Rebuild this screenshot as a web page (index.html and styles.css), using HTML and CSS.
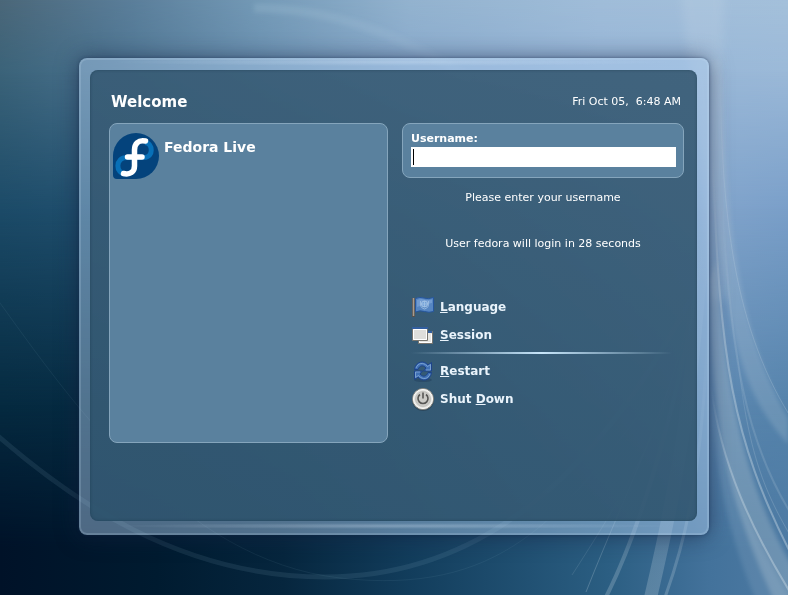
FILE: index.html
```html
<!DOCTYPE html>
<html lang="en">
<head>
<meta charset="utf-8">
<title>Welcome</title>
<link rel="stylesheet" href="styles.css">
</head>
<body>
<div class="backdrop" aria-hidden="true">
  <div class="tint tint-top"></div>
  <div class="tint tint-upper"></div>
  <div class="tint tint-mid"></div>
  <div class="tint tint-low"></div>
  <div class="tint tint-base"></div>
  <svg class="streaks" viewBox="0 0 788 595" preserveAspectRatio="none">
    <defs>
      <filter id="soft" x="-20%" y="-20%" width="140%" height="140%"><feGaussianBlur stdDeviation="2"/></filter>
      <filter id="softer" x="-50%" y="-20%" width="200%" height="140%"><feGaussianBlur stdDeviation="5"/></filter>
      <linearGradient id="fade" x1="0" y1="0" x2="0" y2="1">
        <stop offset="0" stop-color="#d5e2ea" stop-opacity="0"/>
        <stop offset="1" stop-color="#d5e2ea" stop-opacity=".24"/>
      </linearGradient>
      <linearGradient id="glow" x1="0" y1="0" x2="0" y2="1">
        <stop offset="0" stop-color="#d5e2ea" stop-opacity="0"/>
        <stop offset=".4" stop-color="#d5e2ea" stop-opacity=".35"/>
        <stop offset="1" stop-color="#d5e2ea" stop-opacity=".4"/>
      </linearGradient>
      <linearGradient id="arc" gradientUnits="userSpaceOnUse" x1="250" y1="0" x2="480" y2="0">
        <stop offset="0" stop-color="#cfe6f0" stop-opacity=".14"/>
        <stop offset="1" stop-color="#cfe6f0" stop-opacity="0.04"/>
      </linearGradient>
    </defs>
    <path d="M254 8C330 8 400 34 470 78" fill="none" stroke="url(#arc)" stroke-width="9" filter="url(#soft)"/>
    <g fill="none" stroke="#a5d2de">
      <path d="M-10 429C70 500 180 577 325 577S590 490 690 300" stroke-width="5" opacity=".1"/>
      <path d="M-5 296C70 400 180 560 340 578S560 520 650 400" stroke-width="1" opacity=".07"/>
    </g>
    <path d="M678 -40C686 60 700 120 712 300H726C722 200 720 80 726 -40Z" fill="#dbe6ee" opacity=".15" filter="url(#softer)"/>
    <path d="M712 60H720C728 230 738 330 788 418V444C748 400 728 350 712 180Z" fill="#c4d4df" opacity=".2" filter="url(#soft)"/>
    <path d="M710 280C712 400 718 480 774 600H800V580C752 500 728 420 716 260Z" fill="#c4d3da" opacity=".28" filter="url(#soft)"/>
    <path d="M712 400C714 470 730 540 756 600H790C750 530 730 480 712 400Z" fill="#b8cde0" opacity=".14" filter="url(#soft)"/>
    <g fill="none" stroke="url(#glow)">
      <path d="M720 60C721 200 730 320 790 416" opacity=".5"/>
      <path d="M713 160C719 360 733 440 790 552" stroke-width="2"/>
      <path d="M722 200C731 360 746 440 790 512" stroke-width="2" opacity=".4"/>
      <path d="M736 340C746 450 764 490 790 535" opacity=".5"/>
      <path d="M711 385C720 465 755 535 790 592" stroke-width="2"/>
    </g>
    <g fill="none" stroke="url(#fade)">
      <path d="M704 220C698 370 640 470 572 575" opacity=".5"/>
      <path d="M700 260C684 380 630 480 586 592" stroke-width="1"/>
      <path d="M702 250C684 390 640 530 606 597" stroke-width="4"/>
      <path d="M706 210C692 370 690 430 650 600" stroke-width="13"/>
      <path d="M708 330C702 460 690 530 664 600" stroke-width="3"/>
    </g>
  </svg>
</div>

<main class="screen">
  <div class="frame">
    <div class="greeter">
      <header class="greeter-head">
        <h1>Welcome</h1>
        <time class="clock">Fri Oct 05,  6:48 AM</time>
      </header>
      <div class="columns">
        <section class="users" aria-label="Users">
          <button class="user" type="button">
            <svg class="avatar" viewBox="0 0 46 46" aria-hidden="true">
              <path d="M23 0A23 23 0 1 1 23 46H4Q0 46 0 42V23A23 23 0 0 1 23 0Z" fill="#04437c"/>
              <path d="M32 9.500C40 10 41 24.500 31 24.500H14C2 24.500 2 41 13 41" fill="none" stroke="#0870b7" stroke-width="5"/>
              <path d="M32.500 8C25 6.500 21.500 11 21.500 17V33C21.500 39 17 42 10.500 40.500M14.500 24H29" fill="none" stroke="#fff" stroke-width="5.500" stroke-linecap="round"/>
            </svg>
            <span>Fedora Live</span>
          </button>
        </section>
        <section class="login">
          <form class="entry">
            <label for="username">Username:</label>
            <div class="field"><input id="username" type="text" autocomplete="off"><span class="caret"></span></div>
          </form>
          <p class="prompt">Please enter your username</p>
          <p class="timer">User fedora will login in 28 seconds</p>
          <nav class="menu">
            <button type="button">
              <svg viewBox="0 0 24 24" aria-hidden="true">
                <path d="M2.500 3V22" stroke="#56504c" stroke-width="3"/><path d="M2.500 3V21" stroke="#a59c91" stroke-width="1.500"/>
                <path d="M4.500 3.500Q9 1.500 13 3T22.500 2.500V16.500Q18 18 13.500 16.500T4.500 17Z" fill="#5686c2" stroke="#26569c"/>
                <path d="M6 5Q10 3.500 13 4.500T21 4.500V8Q14 9 6 12Z" fill="#8bb0df" opacity=".5"/>
                <circle cx="13.500" cy="9" r="3" fill="#72a1d8" stroke="#a5c4e6"/><path d="M9.500 6Q8.500 13 13.500 14Q18.500 13 17.500 6M11 9H16M13.500 6V12" fill="none" stroke="#a5c4e6" stroke-width=".8"/>
              </svg>
              <span><u>L</u>anguage</span>
            </button>
            <button type="button">
              <svg viewBox="0 0 24 24" aria-hidden="true">
                <path d="M7.500 8.500H21.500V20.500H7.500Z" fill="#e6e6e2" stroke="#77756f"/><path d="M8 9H21" stroke="#315e9f" stroke-width="2"/><path d="M8.500 11V19.500H20.500V11" fill="none" stroke="#fff"/>
                <path d="M1.500 4.500H16.500V17.500H1.500Z" fill="#dededb" stroke="#77756f"/><path d="M1 5H17" stroke="#315e9f" stroke-width="2"/><path d="M2.500 6.500H15.500V16.500H2.500Z" fill="none" stroke="#fff"/>
              </svg>
              <span><u>S</u>ession</span>
            </button>
            <hr>
            <button type="button">
              <svg viewBox="0 0 24 24" aria-hidden="true">
                <ellipse cx="12" cy="21" rx="9" ry="2" fill="#21405d" opacity=".5"/>
                <g fill="#4071b5" stroke="#1d438a" stroke-linejoin="round">
                  <path d="M3.500 10.500C4.500 2 13.500 1 17 6L20.500 3.500V12H12.500L15 9C12 5.500 8.500 6.500 7 10.500Z"/>
                  <path d="M20.500 13.500C19.500 22 10.500 23 7 18L3.500 20.500V12H11.500L9 15C12 18.500 15.500 17.500 17 13.500Z"/>
                </g>
                <path d="M5 9C7 4 12 2.500 16.500 7.500L19.500 5.500V11H15M19 15C17 20 12 21.500 7.500 16.500L4.500 18.500V13H9" fill="none" stroke="#86acd8" stroke-width=".8"/>
              </svg>
              <span><u>R</u>estart</span>
            </button>
            <button type="button">
              <svg viewBox="0 0 24 24" aria-hidden="true">
                <ellipse cx="12" cy="13" rx="11" ry="11" fill="#293f50" opacity=".65"/>
                <circle cx="12" cy="12" r="10.500" fill="#e4e4e1" stroke="#85857f"/>
                <circle cx="12" cy="12" r="9.500" fill="none" stroke="#fafaf8"/>
                <circle cx="12" cy="12" r="7.500" fill="#cbcbc7" stroke="#c2c2be"/>
                <path d="M9 7.500A5 5 0 1 0 15 7.500M12 5.500V11.500" fill="none" stroke="#565654" stroke-width="1.600"/>
              </svg>
              <span>Shut <u>D</u>own</span>
            </button>
          </nav>
        </section>
      </div>
    </div>
  </div>
</main>
</body>
</html>
```
FILE: styles.css
```css
* {
  box-sizing: border-box;
}

body {
  margin: 0;
  min-height: 100vh;
  background: #04283e;
  color: #fff;
  font-family: "DejaVu Sans", sans-serif;
  font-size: 11px;
  line-height: 16px;
}

h1,
p {
  margin: 0;
}

button {
  border: 0;
  background: none;
  color: inherit;
  font: inherit;
  text-align: left;
}

/* Backdrop: horizontal colour ramps faded into each other from top to bottom */
.backdrop {
  position: fixed;
  inset: 0;
  z-index: -1;
  overflow: hidden;
}

.tint,
.streaks {
  position: absolute;
  inset: 0;
  width: 100%;
  height: 100%;
}

.tint-top {
  background: linear-gradient(90deg, #4b6779, #5b7f9b 17%, #749ab7 33%, #93b3cf 52%, #a0bdd9 76%, #a4c0db);
}

.tint-upper {
  background: linear-gradient(90deg, #3b6379, #48708c 12%, #6a90b0 33%, #88a9cc 52%, #96b5d7 76%, #9bb9d8);
  mask-image: linear-gradient(transparent, #000 12%);
}

.tint-mid {
  background: linear-gradient(90deg, #1c4b68, #204f6e 12%, #4a7898 50%, #81a4cb 90%, #7a9fc9);
  mask-image: linear-gradient(transparent 12%, #000 35%);
}

.tint-low {
  background: linear-gradient(90deg, #052a40, #062b42 12%, #1d4c6a 50%, #5c87b0 90%, #5583ab);
  mask-image: linear-gradient(transparent 35%, #000 68%);
}

.tint-base {
  background: linear-gradient(90deg, #001228, #001b30 20%, #06263e 36%, #123d5c 52%, #2b5e82 77%, #43729b 90%, #4d7aa3);
  mask-image: linear-gradient(transparent 68%, #000 92%);
}

/* Login window */
.screen {
  padding: 58px 79px 60px;
}

.frame {
  padding: 12px 12px 14px 11px;
  border-radius: 8px;
  background:
    radial-gradient(ellipse 45% 3px at 50% 468px, rgba(220, 235, 250, 0.3), transparent),
    radial-gradient(ellipse 45% 4px at 50% 4px, rgba(220, 235, 250, 0.3), transparent),
    rgba(172, 205, 238, 0.45);
  box-shadow:
    inset 0 0 0 2px rgba(200, 225, 245, 0.2),
    0 0 3px rgba(20, 40, 75, 0.5),
    0 1px 22px rgba(20, 30, 60, 0.6);
}

.greeter {
  padding: 20px 13px 78px 19px;
  border-radius: 8px;
  background: linear-gradient(15deg, rgba(44, 82, 108, 0.9), rgba(54, 89, 114, 0.9));
  box-shadow: inset 0 0 3px rgba(20, 45, 65, 0.5);
}

.greeter-head {
  display: flex;
  align-items: center;
  justify-content: space-between;
  height: 24px;
  margin-bottom: 9px;
  padding: 0 3px 0 2px;
}

h1 {
  font-size: 15px;
  line-height: 22px;
}

.clock {
  white-space: pre;
}

.columns {
  display: grid;
  grid-template-columns: 279fr 282fr;
  gap: 14px;
}

.users,
.entry {
  border: 1px solid #85a5bc;
  border-radius: 8px;
  background: #5a819e;
}

.users {
  min-height: 320px;
  padding: 9px 3px;
}

.user {
  display: flex;
  gap: 5px;
  width: 100%;
  padding: 0;
  font-size: 14px;
  font-weight: bold;
  line-height: 28px;
}

.avatar {
  flex: none;
  width: 46px;
  height: 46px;
}

.entry {
  padding: 8px 7px 10px 8px;
}

.entry label {
  display: block;
  margin-bottom: 1px;
  font-weight: bold;
  line-height: 14px;
}

.field {
  position: relative;
}

.field input {
  display: block;
  width: 100%;
  height: 20px;
  padding: 0 3px;
  border: 0;
  outline: 0;
  background: #fff;
  color: #000;
  font: inherit;
}

.caret {
  position: absolute;
  top: 2px;
  left: 2px;
  width: 1px;
  height: 16px;
  background: #000;
}

.prompt,
.timer {
  text-align: center;
}

.prompt {
  margin-top: 12px;
}

.timer {
  margin-top: 30px;
}

.menu {
  margin-top: 41px;
  padding: 0 12px 0 9px;
}

.menu button {
  display: flex;
  align-items: center;
  gap: 5px;
  height: 28px;
  padding: 0;
  color: #e9f3fb;
  font-size: 12px;
  font-weight: bold;
}

.menu svg {
  width: 24px;
  height: 24px;
}

.menu hr {
  height: 2px;
  margin: 3px 0;
  border: 0;
  background: linear-gradient(90deg, transparent, #c8e6fa 50%, transparent);
}
```
